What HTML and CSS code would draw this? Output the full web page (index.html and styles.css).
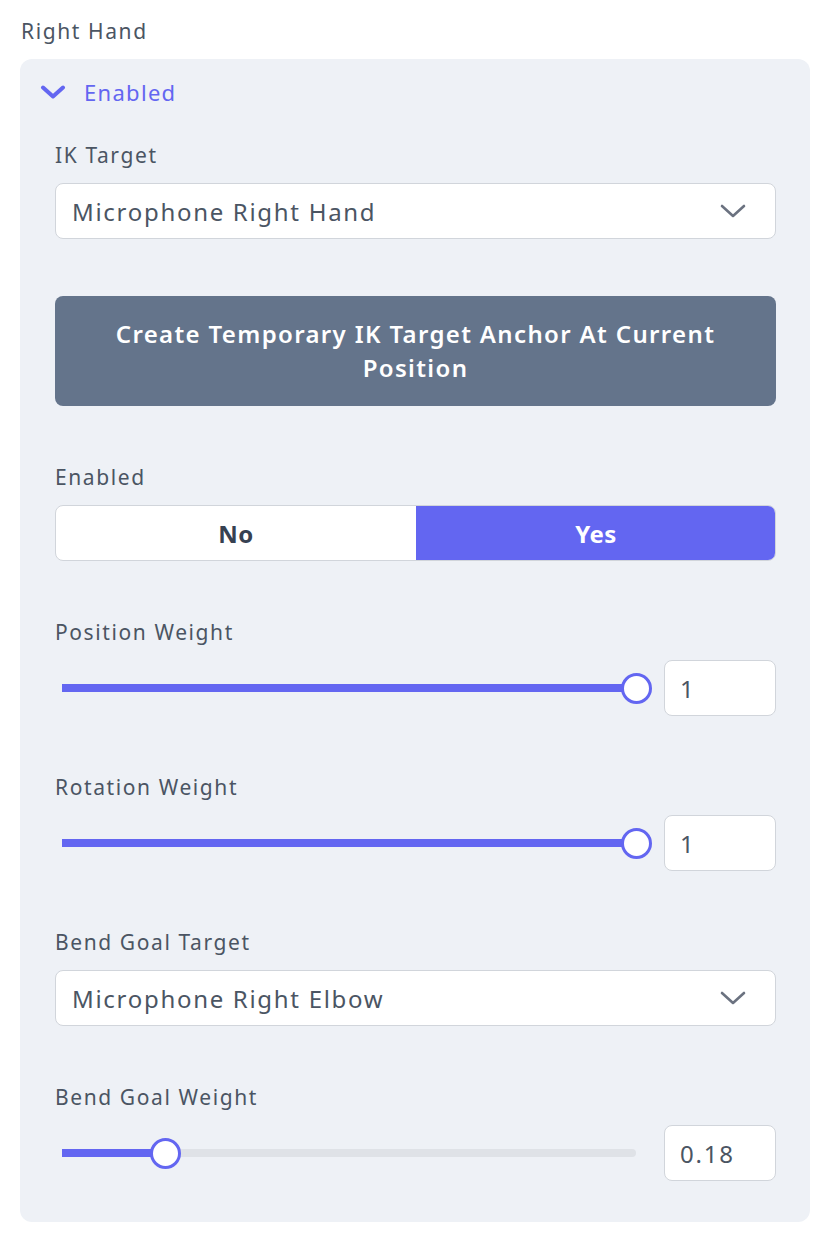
FILE: index.html
```html
<!DOCTYPE html>
<html>
<head>
<meta charset="utf-8">
<link rel="stylesheet" href="styles.css">
</head>
<body>
<div class="wrap">
  <div class="title">Right Hand</div>
  <div class="panel">
    <div class="panel-head">
      <svg class="head-chev" width="26" height="14" viewBox="0 0 26 14"><path d="M3 2.5 L13 11.5 L23 2.5" fill="none" stroke="#6366f1" stroke-width="4" stroke-linecap="round" stroke-linejoin="round"/></svg>
      <span class="head-text">Enabled</span>
    </div>
    <div class="fields">
      <div class="field">
        <div class="label">IK Target</div>
        <div class="select">
          <span>Microphone Right Hand</span>
          <svg class="sel-chev" width="26" height="14" viewBox="0 0 26 14"><path d="M2 2 L13 12 L24 2" fill="none" stroke="#6b7280" stroke-width="2.6" stroke-linecap="round" stroke-linejoin="round"/></svg>
        </div>
      </div>
      <button class="action">Create Temporary IK Target Anchor At Current Position</button>
      <div class="field">
        <div class="label">Enabled</div>
        <div class="toggle">
          <div class="opt">No</div>
          <div class="opt on">Yes</div>
        </div>
      </div>
      <div class="field">
        <div class="label">Position Weight</div>
        <div class="slider-row">
          <div class="slider">
            <div class="track">
              <div class="fill" style="width:100%"></div>
              <div class="thumb" style="left:100%"></div>
            </div>
          </div>
          <div class="num">1</div>
        </div>
      </div>
      <div class="field">
        <div class="label">Rotation Weight</div>
        <div class="slider-row">
          <div class="slider">
            <div class="track">
              <div class="fill" style="width:100%"></div>
              <div class="thumb" style="left:100%"></div>
            </div>
          </div>
          <div class="num">1</div>
        </div>
      </div>
      <div class="field">
        <div class="label">Bend Goal Target</div>
        <div class="select">
          <span>Microphone Right Elbow</span>
          <svg class="sel-chev" width="26" height="14" viewBox="0 0 26 14"><path d="M2 2 L13 12 L24 2" fill="none" stroke="#6b7280" stroke-width="2.6" stroke-linecap="round" stroke-linejoin="round"/></svg>
        </div>
      </div>
      <div class="field">
        <div class="label">Bend Goal Weight</div>
        <div class="slider-row">
          <div class="slider">
            <div class="track">
              <div class="fill" style="width:18%"></div>
              <div class="thumb" style="left:18%"></div>
            </div>
          </div>
          <div class="num">0.18</div>
        </div>
      </div>
    </div>
  </div>
</div>
</body>
</html>
```
FILE: styles.css
```css
* { box-sizing: border-box; }
body {
  margin: 0;
  background: #ffffff;
  font-family: "Noto Sans", "Open Sans", sans-serif;
  color: #4b5563;
}
.wrap {
  padding: 17px 24px 0 20px;
}
.title {
  font-size: 21px;
  line-height: 28px;
  letter-spacing: 1.6px;
  padding-left: 1px;
  margin-bottom: 14px;
  color: #4b5563;
}
.panel {
  background: #eef1f6;
  border-radius: 12px;
  padding: 19px 34px 41px 35px;
}
.panel-head {
  display: flex;
  align-items: center;
  height: 28px;
  margin-left: -15px;
  gap: 18px;
}
.head-chev { display: block; }
.head-text {
  font-size: 22px;
  line-height: 28px;
  letter-spacing: 1.3px;
  color: #6366f1;
}
.fields {
  margin-top: 35px;
  display: flex;
  flex-direction: column;
  gap: 57px;
}
.field {
  display: flex;
  flex-direction: column;
  gap: 14px;
}
.label {
  font-size: 21px;
  line-height: 28px;
  letter-spacing: 1.6px;
  color: #4b5563;
}
.select {
  height: 56px;
  background: #fff;
  border: 1px solid #d1d5db;
  border-radius: 8px;
  display: flex;
  align-items: center;
  justify-content: space-between;
  padding: 0 29px 0 16px;
  font-size: 24px;
  letter-spacing: 1.7px;
  color: #4b5563;
}
.sel-chev { display: block; }
.action {
  height: 110px;
  border: none;
  border-radius: 8px;
  background: #64748b;
  color: #fff;
  font-family: inherit;
  font-size: 24px;
  font-weight: 600;
  line-height: 34px;
  letter-spacing: 1.35px;
  padding: 0 40px;
  text-align: center;
}
.toggle {
  height: 56px;
  display: flex;
  border: 1px solid #d1d5db;
  border-radius: 8px;
  overflow: hidden;
  background: #fff;
}
.opt {
  flex: 1;
  display: flex;
  align-items: center;
  justify-content: center;
  font-size: 24px;
  font-weight: 700;
  letter-spacing: 0.5px;
  color: #374151;
}
.opt.on {
  background: #6366f1;
  color: #fff;
  margin: -1px -1px -1px 0;
}
.slider-row {
  display: flex;
  align-items: center;
  gap: 13px;
}
.slider {
  flex: 1;
  padding: 0 15px 0 7px;
}
.track {
  position: relative;
  height: 8px;
  background: #dfe2e7;
  border-radius: 0 4px 4px 0;
}
.fill {
  height: 100%;
  background: #6366f1;
}
.thumb {
  position: absolute;
  top: 50%;
  width: 31px;
  height: 31px;
  margin: -15.5px 0 0 -15.5px;
  border-radius: 50%;
  background: #fff;
  border: 3px solid #6366f1;
}
.num {
  width: 112px;
  height: 56px;
  background: #fff;
  border: 1px solid #d1d5db;
  border-radius: 8px;
  display: flex;
  align-items: center;
  padding-left: 15px;
  font-size: 24px;
  letter-spacing: 1.8px;
  color: #4b5563;
}
```
